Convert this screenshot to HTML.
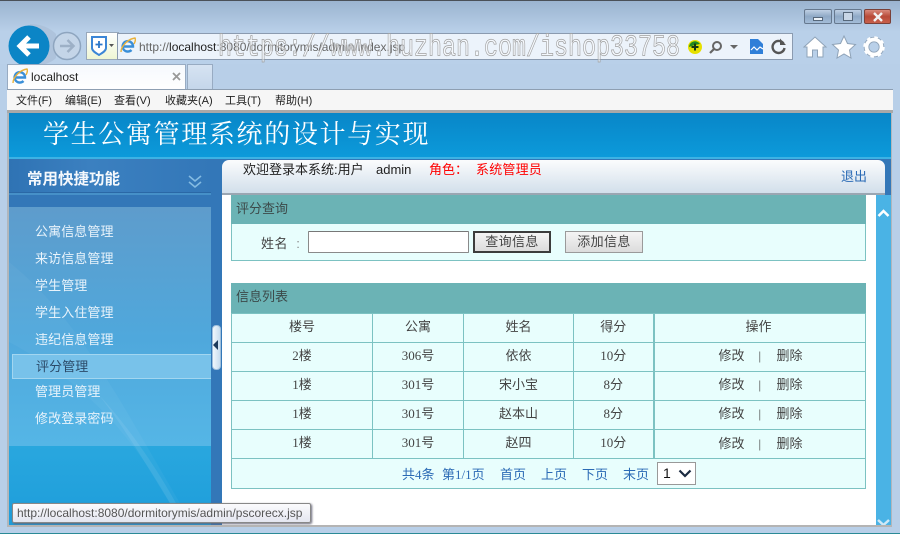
<!DOCTYPE html>
<html><head><meta charset="utf-8"><style>
*{box-sizing:border-box}
html,body{margin:0;padding:0;width:900px;height:534px;overflow:hidden}
body{position:relative;background:#b8cfe8;font-family:"Liberation Sans","WenQuanYi Zen Hei","Noto Sans CJK SC",sans-serif}
.a{position:absolute}
.t{position:absolute;white-space:nowrap;line-height:16px}
.m{font-size:11px;color:#222;top:93px;font-family:"Liberation Sans","WenQuanYi Zen Hei",sans-serif}
.s{font-size:13px;color:#e8f3fb;left:35px;letter-spacing:.1px}
table{position:absolute;left:231px;top:313px;width:635px;height:176px;border-collapse:collapse;table-layout:fixed;background:#e8fefd;font-family:"Liberation Serif","WenQuanYi Zen Hei","Noto Sans CJK SC",serif;font-size:13px;color:#444}
td{border:1px solid #7cc2c2;text-align:center;padding:0 0 3px;height:29px;line-height:16px}
td.o{border-left:2px solid #7cc2c2;position:relative}
td.o span{position:absolute;top:5px}
.w{position:absolute;left:218px;top:32px;font:23.340px/26px "Liberation Mono",monospace;letter-spacing:0;color:rgba(255,255,255,.45);-webkit-text-stroke:.6px #a0a0a0;white-space:nowrap;transform:scaleY(1.3);transform-origin:0 0}
.p{font-size:13px;color:#2a6ab5;top:467px;font-family:"Liberation Serif","WenQuanYi Zen Hei",serif}
.bt{position:absolute;top:231px;height:22px;width:78px;font-size:13px;color:#444;text-align:center;line-height:20px;background:linear-gradient(#f4f4f4,#dcdcdc);letter-spacing:.4px}
</style></head><body>
<div class="a" style="left:0;top:0;width:900px;height:64px;background:linear-gradient(#9ab3cf,#b9d0e9 32px)"></div>
<div class="a" style="left:0;top:0;width:900px;height:1px;background:#4a5058"></div>
<div class="a" style="left:0;top:533px;width:900px;height:1px;background:#2a8a96"></div>

<!-- window buttons -->
<div class="a" style="left:804px;top:9px;width:28px;height:15px;border:1px solid #66788e;border-radius:2px;background:linear-gradient(#bfd0e4,#8fa9c6 50%,#a4bdd8)"></div>
<div class="a" style="left:813px;top:17px;width:10px;height:4px;background:#eef3f8;border:1px solid #56677a"></div>
<div class="a" style="left:834px;top:9px;width:28px;height:15px;border:1px solid #66788e;border-radius:2px;background:linear-gradient(#bfd0e4,#8fa9c6 50%,#a4bdd8)"></div>
<div class="a" style="left:843px;top:12px;width:10px;height:9px;background:#c8d6e6;border:1px solid #56677a"></div>
<div class="a" style="left:864px;top:9px;width:27px;height:15px;border:1px solid #7a4038;border-radius:2px;background:linear-gradient(#d98a7c,#b84a38 50%,#c8604c)"></div>
<svg class="a" style="left:872px;top:12px" width="12" height="10"><path d="M2 1l8 8M10 1l-8 8" stroke="#f2f2f2" stroke-width="2.4"/></svg>

<!-- nav -->
<svg class="a" style="left:6px;top:22px" width="112" height="44">
<path d="M24 2 C38 2 46 8 50 12 L50 36 C44 42 34 44 24 44Z" fill="#a9bed6" opacity=".7"/>
<circle cx="23" cy="24" r="20.5" fill="#0b85c6"/>
<path d="M33 24H15M23 15l-9 9 9 9" fill="none" stroke="#fff" stroke-width="5"/>
<circle cx="61" cy="24" r="13.5" fill="#c4d5e8" stroke="#8ea5bf" stroke-width="1.5"/>
<path d="M54 24H67M61.500 18l6 6-6 6" fill="none" stroke="#9db0c6" stroke-width="2.5"/>
</svg>
<div class="a" style="left:86px;top:32px;width:33px;height:28px;background:linear-gradient(#fff,#eef6d4);border:1px solid #98a8ba"></div>
<svg class="a" style="left:91px;top:36px" width="24" height="20"><path d="M1 1H15V12C15 15 11 17 8 19C5 17 1 15 1 12Z" fill="#fff" stroke="#3b86d6" stroke-width="2"/><path d="M8 5V12M4.500 8.500H11.500" stroke="#2a76c8" stroke-width="1.800"/><path d="M18 8h5l-2.500 3z" fill="#555"/></svg>
<div class="a" style="left:117px;top:33px;width:676px;height:27px;background:#ecf3fb;border:1px solid #8b9bb0"></div>
<div class="t" style="left:139px;top:39px;font-size:12px;color:#666">http://<span style="color:#222">localhost</span>:8080/dormitorymis/admin/index.jsp</div>
<svg class="a" style="left:120px;top:37px" width="16" height="17"><path d="M3.500 9.500H13A5.200 5.200 0 1 0 11.500 13" fill="none" stroke="#3a8fd8" stroke-width="2.400"/><path d="M1 15C1 9 8 2 15 1C16 3 15 5 14 7" fill="none" stroke="#e9b23c" stroke-width="1.400"/></svg>
<div class="w">https://www.huzhan.com/ishop33758</div>
<svg class="a" style="left:687px;top:39px" width="16" height="16"><circle cx="8" cy="8" r="7" fill="#e6e000"/><path d="M2 8A6 6 0 0 1 13 5L8 6Z" fill="#1f8a1f"/><path d="M8 4.500V11.500M4.500 8H11.500" stroke="#143a14" stroke-width="2"/></svg>
<svg class="a" style="left:709px;top:40px" width="32" height="14"><circle cx="8" cy="6" r="4" fill="none" stroke="#666" stroke-width="2"/><path d="M5 9L1 13" stroke="#666" stroke-width="2.200"/><path d="M21 5h8l-4 4z" fill="#666"/></svg>
<svg class="a" style="left:750px;top:38px" width="14" height="17"><path d="M0 1H8L13 6V16H0Z" fill="#2f7fd8"/><path d="M1 12L4 9 7 12 10 9 13 11" fill="none" stroke="#fff" stroke-width="1.200"/></svg>
<svg class="a" style="left:770px;top:38px" width="17" height="17"><path d="M13.500 5.500A6 6 0 1 0 14.500 10" fill="none" stroke="#555" stroke-width="2.400"/><path d="M10 0.500V7H16Z" fill="#555"/></svg>
<svg class="a" style="left:803px;top:35px" width="82" height="24">
<path d="M1 12L12 2 23 12H20V22H14.500V15H9.500V22H4V12Z" fill="#fff" stroke="#8fa3b8"/>
<path d="M41 1L44.500 8.500 52.500 9.500 46.500 15 48 23 41 19 34 23 35.500 15 29.500 9.500 37.500 8.500Z" fill="#fff" stroke="#8fa3b8"/>
<circle cx="71" cy="12" r="7.500" fill="none" stroke="#8fa3b8" stroke-width="5.500"/>
<circle cx="71" cy="12" r="7.500" fill="none" stroke="#fff" stroke-width="3.800"/>
<circle cx="71" cy="12" r="9.500" fill="none" stroke="#fff" stroke-width="2.500" stroke-dasharray="3.500 3.960"/>
</svg>

<!-- tabs -->
<div class="a" style="left:7px;top:64px;width:179px;height:27px;background:linear-gradient(#f6f9fd,#fff);border:1px solid #98abc2;border-bottom:none"></div>
<svg class="a" style="left:12px;top:68px" width="16" height="17"><path d="M3.500 9.500H13A5.200 5.200 0 1 0 11.500 13" fill="none" stroke="#3a8fd8" stroke-width="2.400"/><path d="M1 15C1 9 8 2 15 1C16 3 15 5 14 7" fill="none" stroke="#e9b23c" stroke-width="1.400"/></svg>
<div class="t" style="left:31px;top:69px;font-size:12px;color:#222">localhost</div>
<svg class="a" style="left:172px;top:72px" width="10" height="10"><path d="M1 1l7 7M8 1l-7 7" stroke="#999" stroke-width="1.800"/></svg>
<div class="a" style="left:187px;top:64px;width:26px;height:26px;background:linear-gradient(#d6e3f2,#c4d6ea);border:1px solid #98abc2;border-bottom:none"></div>

<!-- menu -->
<div class="a" style="left:7px;top:89px;width:886px;height:1px;background:#8e9fb2"></div>
<div class="a" style="left:7px;top:90px;width:886px;height:20px;background:#f6f6f6"></div>
<div class="a" style="left:7px;top:110px;width:886px;height:3px;background:#a8a8a8"></div>
<div class="t m" style="left:16px">文件(F)</div>
<div class="t m" style="left:65px">编辑(E)</div>
<div class="t m" style="left:114px">查看(V)</div>
<div class="t m" style="left:165px">收藏夹(A)</div>
<div class="t m" style="left:225px">工具(T)</div>
<div class="t m" style="left:275px">帮助(H)</div>

<!-- page -->
<div class="a" style="left:7px;top:113px;width:885px;height:413px;background:#fff;border-left:2px solid #b0b6bc;border-right:1px solid #b0b6bc"></div>
<div class="a" style="left:9px;top:113px;width:882px;height:46px;background:linear-gradient(#0886c8,#0c9ada);border-bottom:2px solid #3db2e4"></div>
<div class="t" style="left:43px;top:119px;line-height:32px;font-size:26px;letter-spacing:1.650px;color:#fff;font-family:'Liberation Serif','Noto Serif CJK SC',serif">学生公寓管理系统的设计与实现</div>

<!-- sidebar -->
<div class="a" style="left:9px;top:159px;width:213px;height:367px;background:#3377b8"></div>
<div class="a" style="left:9px;top:159px;width:202px;height:34px;background:linear-gradient(90deg,#2f73b4,#3b80c0 40%,#3377b8);border-bottom:1px solid #2a68a6"></div>
<div class="a" style="left:9px;top:193px;width:202px;height:2px;background:#4690c8"></div>
<div class="t" style="left:27px;top:171px;line-height:18px;font-size:15.500px;font-weight:bold;color:#f4f8fc">常用快捷功能</div>
<svg class="a" style="left:188px;top:175px" width="14" height="14"><path d="M1 1l6 5 6-5M1 7l6 5 6-5" fill="none" stroke="#84bbe2" stroke-width="1.600"/></svg>
<div class="a" style="left:9px;top:446px;width:202px;height:80px;background:linear-gradient(#29a7de,#1d9ddb)"></div>
<div class="a" style="left:9px;top:207px;width:202px;height:239px;background:linear-gradient(#5e9ccc,#4fa8dc 55%,#55b6e6)"></div>
<svg class="a" style="left:9px;top:207px" width="202" height="319"><path d="M0 55C50 95 85 150 118 205L172 298H162C130 240 85 180 0 135Z" fill="#fff" opacity=".04"/><path d="M90 188C120 220 150 265 168 298H162C140 262 115 220 90 188Z" fill="#fff" opacity=".08"/></svg>
<div class="a" style="left:12px;top:354px;width:199px;height:25px;background:#78c2ea;border:1px solid #a2d6f0;border-right:none"></div>
<div class="t s" style="top:224px">公寓信息管理</div>
<div class="t s" style="top:251px">来访信息管理</div>
<div class="t s" style="top:278px">学生管理</div>
<div class="t s" style="top:305px">学生入住管理</div>
<div class="t s" style="top:332px">违纪信息管理</div>
<div class="t s" style="top:359px;left:36px;color:#2b4a68">评分管理</div>
<div class="t s" style="top:384px">管理员管理</div>
<div class="t s" style="top:411px">修改登录密码</div>
<div class="a" style="left:212px;top:325px;width:9px;height:45px;border-radius:4px;background:linear-gradient(90deg,#f0f6fb,#c8ddf0);border:1px solid #9fbfdc"></div>
<svg class="a" style="left:213px;top:340px" width="6" height="10"><path d="M0 5L5 0V10Z" fill="#1d3a5c"/></svg>

<!-- top bar -->
<div class="a" style="left:222px;top:159px;width:669px;height:36px;background:#3377b8"></div>
<div class="a" style="left:222px;top:160px;width:663px;height:35px;border-radius:7px 7px 0 0;background:linear-gradient(#fbfcfd,#d2dfeb);border-bottom:2px solid #9aa6b2"></div>
<div class="t" style="left:243px;top:162px;font-size:13px;color:#222">欢迎登录本系统:用户</div>
<div class="t" style="left:376px;top:162px;font-size:13px;color:#222">admin</div>
<div class="t" style="left:429px;top:162px;font-size:13px;color:#f00">角色：</div>
<div class="t" style="left:476px;top:162px;font-size:13px;color:#f00;letter-spacing:.2px">系统管理员</div>
<div class="t" style="left:841px;top:169px;font-size:13px;color:#2a6ab5">退出</div>

<!-- scrollbar -->
<div class="a" style="left:876px;top:195px;width:15px;height:331px;background:#4ab3e5"></div>
<svg class="a" style="left:877px;top:209px" width="13" height="9"><path d="M1.500 7L6.500 2 11.500 7" fill="none" stroke="#fff" stroke-width="2.500"/></svg>
<svg class="a" style="left:877px;top:519px" width="13" height="7"><path d="M1 1L6.500 6 12 1" fill="none" stroke="#cfe8f6" stroke-width="2.500"/></svg>

<!-- panel 1 -->
<div class="a" style="left:231px;top:195px;width:635px;height:66px;background:#e8fefd;border:1px solid #7cc2c2;border-top:none"></div>
<div class="a" style="left:231px;top:195px;width:635px;height:29px;background:#6bb3b5"></div>
<div class="t" style="left:236px;top:201px;font-size:13px;color:#3c4a4a">评分查询</div>
<div class="t" style="left:261px;top:236px;font-size:13px;color:#444;letter-spacing:.5px">姓名&nbsp; <span style="color:#888">:</span></div>
<div class="a" style="left:308px;top:231px;width:161px;height:22px;background:#fff;border:1px solid #8a8a8a;border-top-color:#777;border-radius:1px"></div>
<div class="bt" style="left:473px;border:2px solid #3c3c3c;line-height:18px">查询信息</div>
<div class="bt" style="left:565px;border:1px solid #9a9a9a">添加信息</div>

<!-- panel 2 -->
<div class="a" style="left:231px;top:283px;width:635px;height:30px;background:#6bb3b5"></div>
<div class="t" style="left:236px;top:289px;font-size:13px;color:#3c4a4a">信息列表</div>
<table>
<colgroup><col style="width:141px"><col style="width:91px"><col style="width:110px"><col style="width:80px"><col></colgroup>
<tr><td>楼号</td><td>公寓</td><td>姓名</td><td>得分</td><td class="o"><span style="left:91px">操作</span></td></tr>
<tr><td>2楼</td><td>306号</td><td>依依</td><td>10分</td><td class="o"><span style="left:64px">修改</span><span style="left:104px">|</span><span style="left:122px">删除</span></td></tr>
<tr><td>1楼</td><td>301号</td><td>宋小宝</td><td>8分</td><td class="o"><span style="left:64px">修改</span><span style="left:104px">|</span><span style="left:122px">删除</span></td></tr>
<tr><td>1楼</td><td>301号</td><td>赵本山</td><td>8分</td><td class="o"><span style="left:64px">修改</span><span style="left:104px">|</span><span style="left:122px">删除</span></td></tr>
<tr><td>1楼</td><td>301号</td><td>赵四</td><td>10分</td><td class="o"><span style="left:64px;top:6px">修改</span><span style="left:104px;top:6px">|</span><span style="left:122px;top:6px">删除</span></td></tr>
<tr><td colspan="5" style="height:30px"></td></tr>
</table>
<div class="t p" style="left:402px">共4条</div>
<div class="t p" style="left:442px">第1/1页</div>
<div class="t p" style="left:500px">首页</div>
<div class="t p" style="left:541px">上页</div>
<div class="t p" style="left:582px">下页</div>
<div class="t p" style="left:623px">末页</div>
<div class="a" style="left:657px;top:462px;width:39px;height:23px;background:#fff;border:1px solid #999"></div>
<div class="t" style="left:663px;top:465px;font-size:14px;color:#111">1</div>
<svg class="a" style="left:678px;top:469px" width="14" height="9"><path d="M1.500 1.500L7 7 12.500 1.500" fill="none" stroke="#1a2a40" stroke-width="2.200"/></svg>

<!-- tooltip -->
<div class="a" style="left:12px;top:503px;width:299px;height:20px;background:linear-gradient(#fbfbfd,#e4e6f0);border:1px solid #888;border-radius:2px;box-shadow:1px 1px 2px #667"></div>
<div class="t" style="left:17px;top:505px;font-size:12px;color:#555">http://localhost:8080/dormitorymis/admin/pscorecx.jsp</div>

<!-- bottom band -->
<div class="a" style="left:7px;top:525px;width:885px;height:2px;background:#b4b4b4"></div>
<div class="a" style="left:0;top:527px;width:900px;height:6px;background:#b8cfe8"></div>
</body></html>
